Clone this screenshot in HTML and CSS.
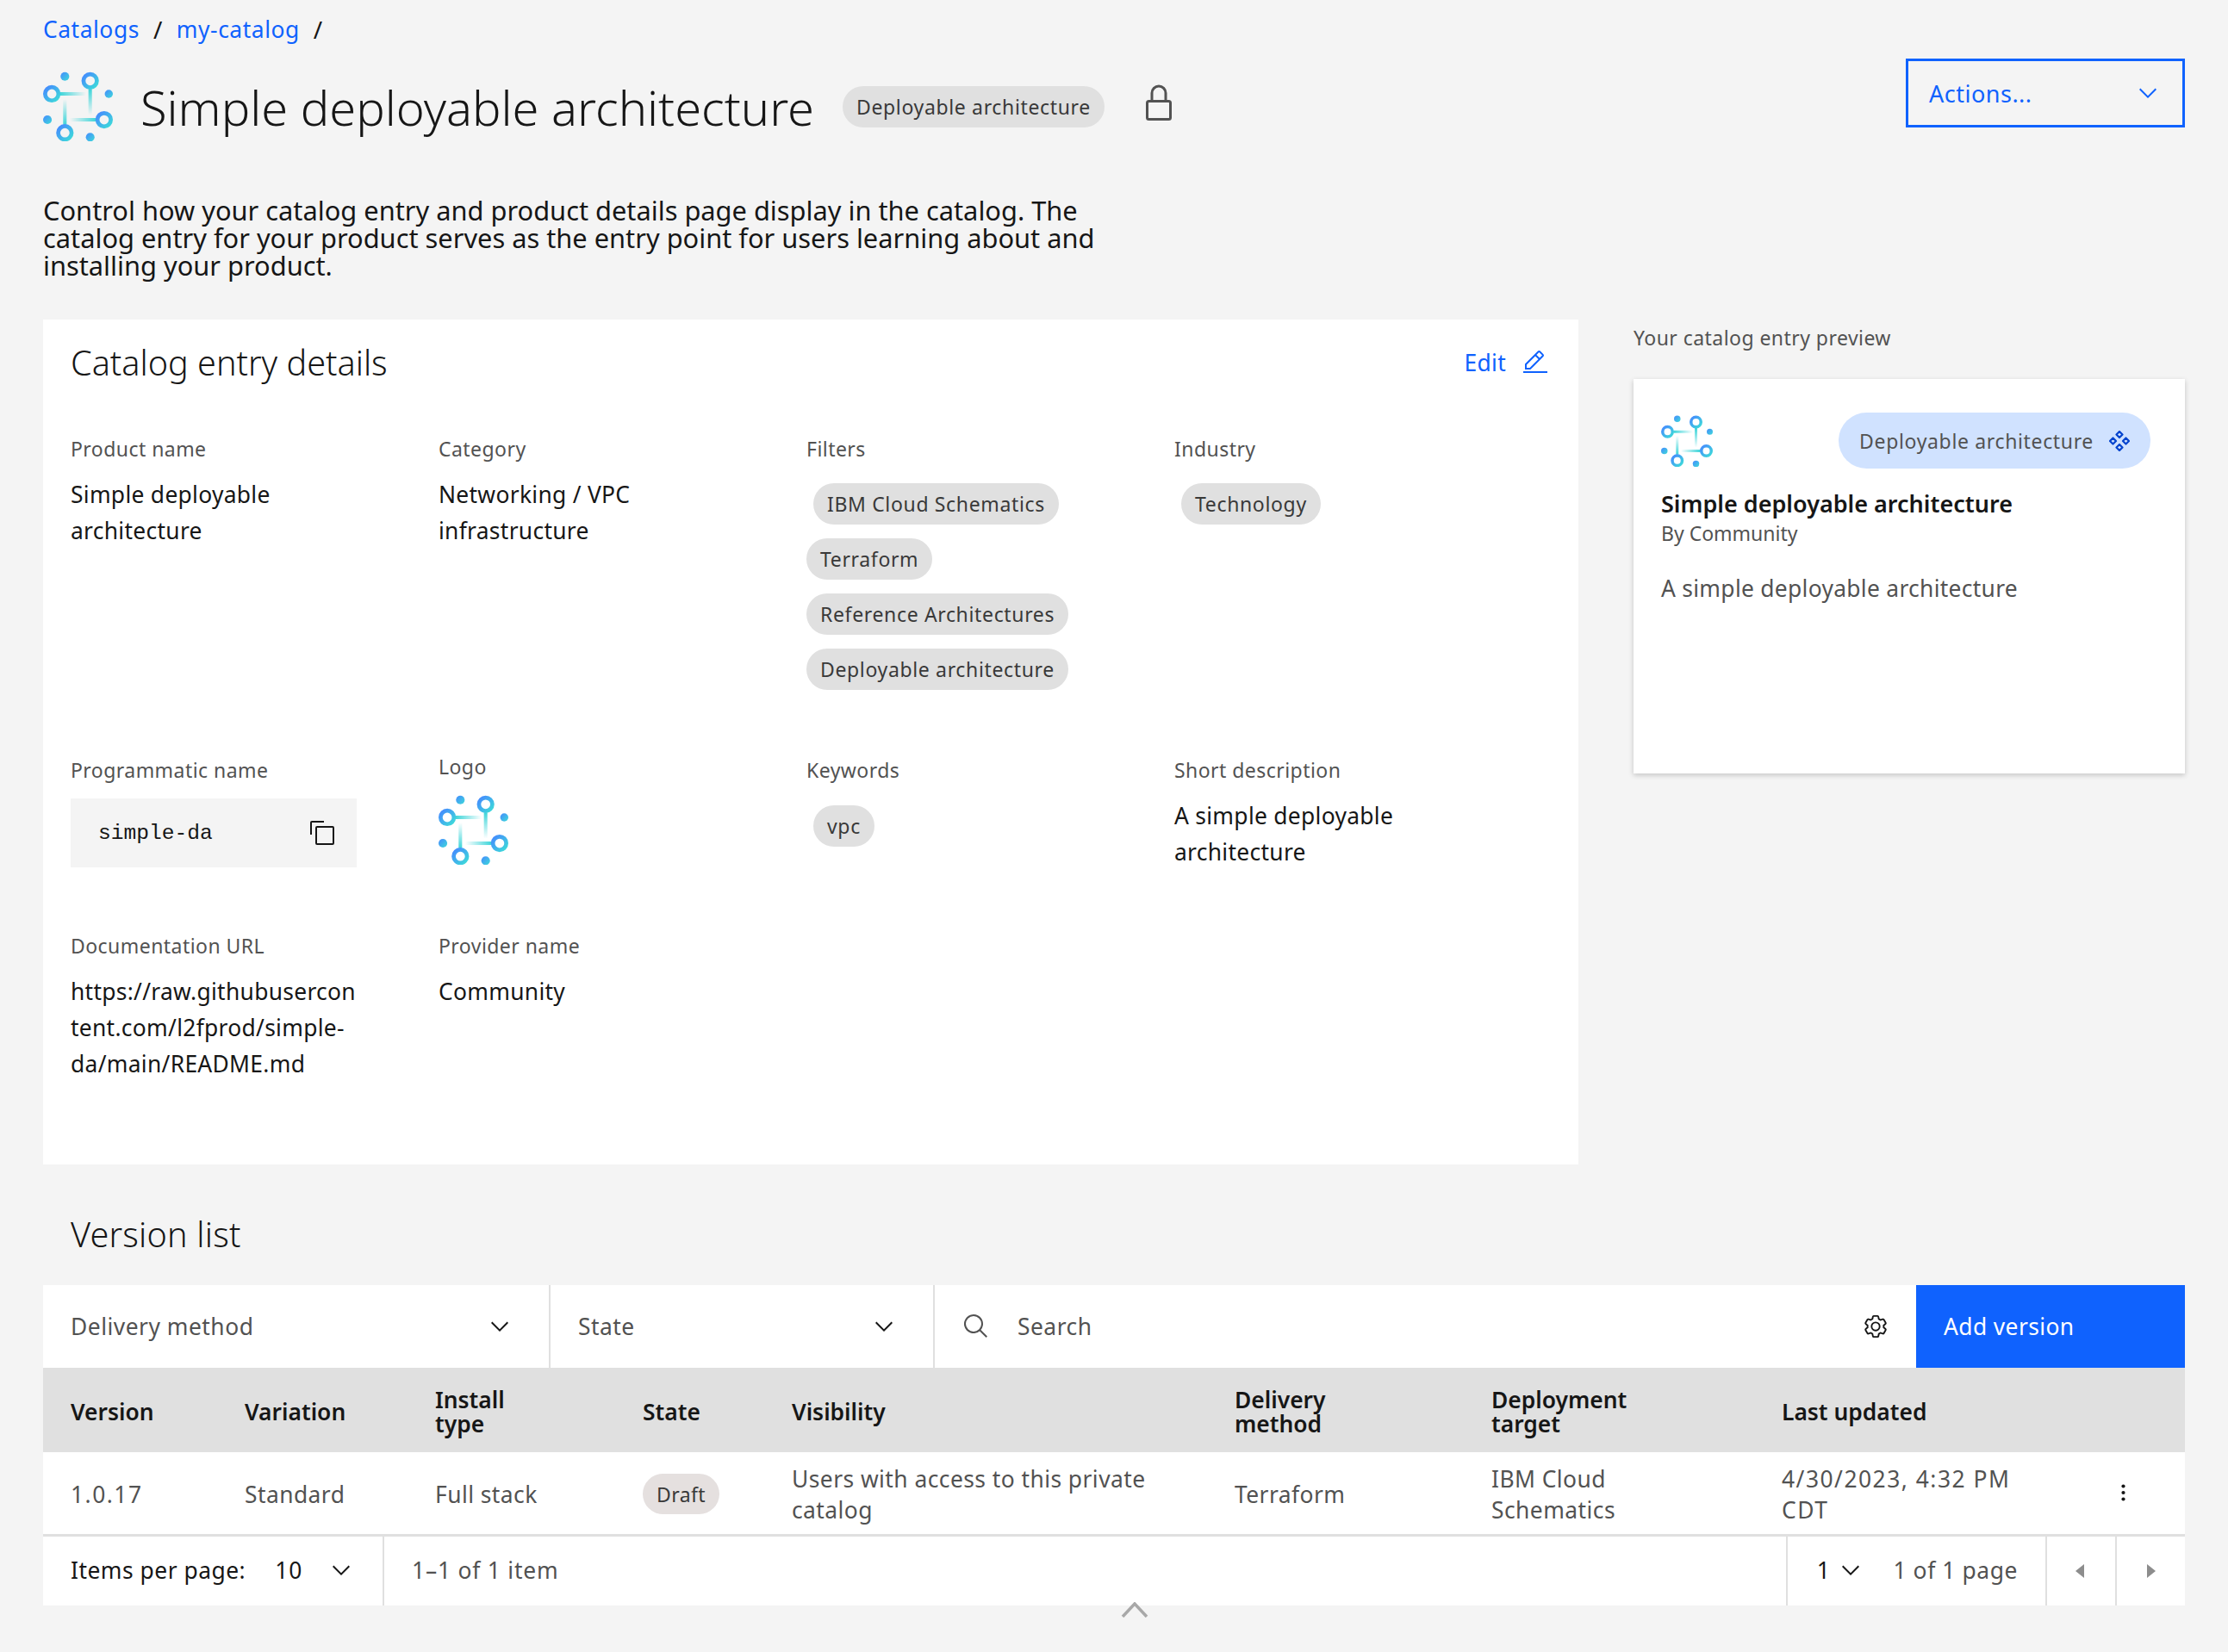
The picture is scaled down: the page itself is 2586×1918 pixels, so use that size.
FILE: index.html
```html
<!DOCTYPE html>
<html lang="en">
<head>
    <meta charset="UTF-8">
    <title>Simple deployable architecture</title>
    <link rel="stylesheet" href="styles.css">
</head>
<body>

    <header class="page-head">
        <div class="head-left">
            <nav class="breadcrumb">
                <a href="#">Catalogs</a><span class="sep">/</span><a href="#">my-catalog</a><span class="sep">/</span>
            </nav>
            <div class="title-row">
                <svg class="logo logo-lg" viewBox="60 70 240 240">
                    <defs>
                        <linearGradient id="ringGrad" x1="0" y1="0" x2="1" y2="1">
                            <stop offset="0" stop-color="#4589ff"/>
                            <stop offset="1" stop-color="#3ddbd9"/>
                        </linearGradient>
                        <linearGradient id="fadeRight" x1="0" y1="0" x2="1" y2="0">
                            <stop offset="0" stop-color="#3dd5d9"/>
                            <stop offset="1" stop-color="#3dd5d9" stop-opacity="0"/>
                        </linearGradient>
                        <linearGradient id="fadeLeft" x1="1" y1="0" x2="0" y2="0">
                            <stop offset="0" stop-color="#3dd5d9"/>
                            <stop offset="1" stop-color="#3dd5d9" stop-opacity="0"/>
                        </linearGradient>
                        <linearGradient id="fadeDown" x1="0" y1="0" x2="0" y2="1">
                            <stop offset="0" stop-color="#3dd5d9"/>
                            <stop offset="1" stop-color="#3dd5d9" stop-opacity="0"/>
                        </linearGradient>
                        <linearGradient id="fadeUp" x1="0" y1="1" x2="0" y2="0">
                            <stop offset="0" stop-color="#3dd5d9"/>
                            <stop offset="1" stop-color="#3dd5d9" stop-opacity="0"/>
                        </linearGradient>
                        <g id="logoMark">
                            <rect x="118" y="141" width="90" height="12" fill="url(#fadeRight)"/>
                            <rect x="216" y="130" width="12" height="90" fill="url(#fadeDown)"/>
                            <rect x="152" y="230" width="90" height="12" fill="url(#fadeLeft)"/>
                            <rect x="129" y="165" width="12" height="88" fill="url(#fadeUp)"/>
                            <circle cx="222" cy="102" r="23" fill="none" stroke="url(#ringGrad)" stroke-width="14"/>
                            <circle cx="90" cy="147" r="23" fill="none" stroke="url(#ringGrad)" stroke-width="14"/>
                            <circle cx="270" cy="236" r="23" fill="none" stroke="url(#ringGrad)" stroke-width="14"/>
                            <circle cx="135" cy="281" r="23" fill="none" stroke="url(#ringGrad)" stroke-width="14"/>
                            <circle cx="135" cy="87" r="15" fill="url(#ringGrad)"/>
                            <circle cx="286" cy="147" r="14" fill="url(#ringGrad)"/>
                            <circle cx="75" cy="236" r="15" fill="url(#ringGrad)"/>
                            <circle cx="222" cy="296" r="15" fill="url(#ringGrad)"/>
                        </g>
                    </defs>
                    <use href="#logoMark"/>
                </svg>
                <h1>Simple deployable architecture</h1>
                <span class="tag tag-title">Deployable architecture</span>
                <svg class="lock-icon" viewBox="0 0 30 42">
                    <path d="M7 18V10a8 8 0 0 1 16 0v8" fill="none" stroke="#525252" stroke-width="3"/>
                    <rect x="1.500" y="19.500" width="27" height="21" rx="2" fill="none" stroke="#525252" stroke-width="3"/>
                </svg>
            </div>
        </div>
        <button class="actions-btn">
            <span>Actions...</span>
            <svg class="chevron" viewBox="0 0 16 16"><path d="M8 11L3 6l.7-.7L8 9.6l4.3-4.3.7.7z" fill="#0f62fe"/></svg>
        </button>
    </header>

    <p class="intro">Control how your catalog entry and product details page display in the catalog. The catalog entry for your product serves as the entry point for users learning about and installing your product.</p>

    <div class="top-columns">
        <section class="details-card">
            <div class="card-head">
                <h2>Catalog entry details</h2>
                <a href="#" class="edit-link">Edit
                    <svg class="edit-icon" viewBox="0 0 32 32"><path d="M2 26H30V28H2zM25.4 9c.8-.8.8-2 0-2.8l-3.6-3.6c-.8-.8-2-.8-2.8 0l-15 15V24h6.4L25.4 9zM20.4 4L24 7.6l-3 3L17.4 7 20.4 4zM6 22v-3.6l10-10 3.6 3.6-10 10H6z" fill="#0f62fe"/></svg>
                </a>
            </div>
            <div class="details-grid">
                <div class="field">
                    <div class="field-label">Product name</div>
                    <div class="field-value">Simple deployable architecture</div>
                </div>
                <div class="field">
                    <div class="field-label">Category</div>
                    <div class="field-value">Networking / VPC infrastructure</div>
                </div>
                <div class="field">
                    <div class="field-label">Filters</div>
                    <div class="tag-stack">
                        <span class="tag tag-first">IBM Cloud Schematics</span>
                        <span class="tag">Terraform</span>
                        <span class="tag">Reference Architectures</span>
                        <span class="tag">Deployable architecture</span>
                    </div>
                </div>
                <div class="field">
                    <div class="field-label">Industry</div>
                    <div class="tag-stack">
                        <span class="tag tag-first">Technology</span>
                    </div>
                </div>

                <div class="field">
                    <div class="field-label">Programmatic name</div>
                    <div class="code-box">
                        <code>simple-da</code>
                        <svg class="copy-icon" viewBox="0 0 32 32">
                            <path d="M28,10V28H10V10H28m0-2H10a2,2,0,0,0-2,2V28a2,2,0,0,0,2,2H28a2,2,0,0,0,2-2V10a2,2,0,0,0-2-2Z" fill="#161616"/>
                            <path d="M4,18H2V4A2,2,0,0,1,4,2H18V4H4Z" fill="#161616"/>
                        </svg>
                    </div>
                </div>
                <div class="field field-logo">
                    <div class="field-label">Logo</div>
                    <svg class="logo logo-lg" viewBox="60 70 240 240"><use href="#logoMark"/></svg>
                </div>
                <div class="field">
                    <div class="field-label">Keywords</div>
                    <div class="tag-stack tag-stack-tight">
                        <span class="tag tag-first">vpc</span>
                    </div>
                </div>
                <div class="field">
                    <div class="field-label">Short description</div>
                    <div class="field-value">A simple deployable architecture</div>
                </div>

                <div class="field">
                    <div class="field-label">Documentation URL</div>
                    <div class="field-value">https://raw.githubusercon<br>tent.com/l2fprod/simple-<br>da/main/README.md</div>
                </div>
                <div class="field">
                    <div class="field-label">Provider name</div>
                    <div class="field-value">Community</div>
                </div>
            </div>
        </section>

        <aside class="preview">
            <div class="preview-label">Your catalog entry preview</div>
            <div class="preview-card">
                <div class="preview-top">
                    <svg class="logo logo-sm" viewBox="60 70 240 240"><use href="#logoMark"/></svg>
                    <span class="preview-pill">
                        Deployable architecture
                        <svg class="diamonds" viewBox="0 0 24 24">
                            <path d="M12 1l3.500 3.500L12 8 8.500 4.500zM4.500 8.500L8 12l-3.500 3.500L1 12zM19.500 8.500L23 12l-3.500 3.500L16 12zM12 16l3.500 3.500L12 23l-3.500-3.500z" fill="none" stroke="#0043ce" stroke-width="2.200" stroke-linejoin="round"/>
                        </svg>
                    </span>
                </div>
                <div class="preview-title">Simple deployable architecture</div>
                <div class="preview-by">By Community</div>
                <div class="preview-desc">A simple deployable architecture</div>
            </div>
        </aside>
    </div>

    <h2 class="version-title">Version list</h2>

    <section class="versions">
        <div class="toolbar">
            <div class="filter-select filter-delivery">
                <span>Delivery method</span>
                <svg class="chevron" viewBox="0 0 16 16"><path d="M8 11L3 6l.7-.7L8 9.6l4.3-4.3.7.7z" fill="#161616"/></svg>
            </div>
            <div class="filter-select filter-state">
                <span>State</span>
                <svg class="chevron" viewBox="0 0 16 16"><path d="M8 11L3 6l.7-.7L8 9.6l4.3-4.3.7.7z" fill="#161616"/></svg>
            </div>
            <div class="search-box">
                <svg class="search-icon" viewBox="0 0 32 32"><path d="M29,27.5859l-7.5521-7.5521a11.0177,11.0177,0,1,0-1.4141,1.4141L27.5859,29ZM4,13a9,9,0,1,1,9,9A9.01,9.01,0,0,1,4,13Z" fill="#525252"/></svg>
                <span class="search-text">Search</span>
                <svg class="gear-icon" viewBox="0 0 32 32">
                    <path d="M27,16.76c0-.25,0-.5,0-.76s0-.51,0-.77l1.92-1.68A2,2,0,0,0,29.3,11L26.94,7a2,2,0,0,0-1.73-1,2,2,0,0,0-.64.1l-2.43.82a11.35,11.35,0,0,0-1.31-.75l-.51-2.52a2,2,0,0,0-2-1.61H13.64a2,2,0,0,0-2,1.61l-.51,2.52a11.48,11.48,0,0,0-1.32.75L7.43,6.06A2,2,0,0,0,6.79,6,2,2,0,0,0,5.06,7L2.7,11a2,2,0,0,0,.41,2.51L5,15.24c0,.25,0,.5,0,.76s0,.51,0,.77L3.11,18.45A2,2,0,0,0,2.7,21L5.06,25a2,2,0,0,0,1.73,1,2,2,0,0,0,.64-.1l2.43-.82a11.35,11.35,0,0,0,1.31.75l.51,2.52a2,2,0,0,0,2,1.61h4.72a2,2,0,0,0,2-1.61l.51-2.52a11.48,11.48,0,0,0,1.32-.75l2.42.82a2,2,0,0,0,.64.1,2,2,0,0,0,1.73-1L29.3,21a2,2,0,0,0-.41-2.51ZM25.21,24l-3.43-1.16a8.86,8.86,0,0,1-2.71,1.57L18.36,28H13.64l-.71-3.55a9.36,9.36,0,0,1-2.7-1.57L6.79,24,4.43,20l2.72-2.4a8.9,8.9,0,0,1,0-3.13L4.43,12,6.79,8l3.43,1.16a8.86,8.86,0,0,1,2.71-1.57L13.64,4h4.72l.71,3.55a9.36,9.36,0,0,1,2.7,1.57L25.21,8,27.57,12l-2.72,2.4a8.9,8.9,0,0,1,0,3.13L27.57,20Z" fill="#161616"/>
                    <path d="M16,22a6,6,0,1,1,6-6A5.94,5.94,0,0,1,16,22Zm0-10a3.91,3.91,0,0,0-4,4,3.91,3.91,0,0,0,4,4,3.91,3.91,0,0,0,4-4A3.91,3.91,0,0,0,16,12Z" fill="#161616"/>
                </svg>
            </div>
            <button class="add-btn">Add version</button>
        </div>

        <table class="version-table">
            <colgroup>
                <col class="col-version">
                <col class="col-variation">
                <col class="col-install">
                <col class="col-state">
                <col class="col-visibility">
                <col class="col-delivery">
                <col class="col-target">
                <col class="col-updated">
                <col class="col-menu">
            </colgroup>
            <thead>
                <tr>
                    <th>Version</th>
                    <th>Variation</th>
                    <th><span class="head-wrap">Install type</span></th>
                    <th>State</th>
                    <th>Visibility</th>
                    <th><span class="head-wrap">Delivery method</span></th>
                    <th><span class="head-wrap">Deployment target</span></th>
                    <th>Last updated</th>
                    <th></th>
                </tr>
            </thead>
            <tbody>
                <tr>
                    <td class="num">1.0.17</td>
                    <td>Standard</td>
                    <td>Full stack</td>
                    <td><span class="tag tag-draft">Draft</span></td>
                    <td>Users with access to this private<br>catalog</td>
                    <td>Terraform</td>
                    <td>IBM Cloud<br>Schematics</td>
                    <td class="num">4/30/2023, 4:32 PM<br>CDT</td>
                    <td class="menu-cell">
                        <svg class="overflow-icon" viewBox="0 0 5 20">
                            <circle cx="2.500" cy="2.500" r="2.100"/><circle cx="2.500" cy="10" r="2.100"/><circle cx="2.500" cy="17.500" r="2.100"/>
                        </svg>
                    </td>
                </tr>
            </tbody>
        </table>

        <div class="pagination">
            <div class="per-page">
                <span class="dark">Items per page:</span>
                <span class="dark per-value">10</span>
                <svg class="chevron" viewBox="0 0 16 16"><path d="M8 11L3 6l.7-.7L8 9.6l4.3-4.3.7.7z" fill="#161616"/></svg>
            </div>
            <div class="item-range">1–1 of 1 item</div>
            <div class="page-pick">
                <span class="dark">1</span>
                <svg class="chevron" viewBox="0 0 16 16"><path d="M8 11L3 6l.7-.7L8 9.6l4.3-4.3.7.7z" fill="#161616"/></svg>
                <span class="page-count">1 of 1 page</span>
            </div>
            <div class="page-btn"><svg class="caret" viewBox="0 0 32 32"><path d="M20 24L10 16 20 8z" fill="#8d8d8d"/></svg></div>
            <div class="page-btn"><svg class="caret" viewBox="0 0 32 32"><path d="M12 8L22 16 12 24z" fill="#8d8d8d"/></svg></div>
            <svg class="collapse-chevron" viewBox="0 0 32 18"><path d="M2 17L16 2l14 15" fill="none" stroke="#a8a8a8" stroke-width="3.500"/></svg>
        </div>
    </section>

</body>
</html>
```

FILE: styles.css
```css
* {
    box-sizing: border-box;
}
body {
    min-height: 100vh;
    margin: 0;
    padding: 16px 50px 0;
    background: #f4f4f4;
    color: #161616;
    font-family: "Noto Sans", "Open Sans", sans-serif;
    font-weight: 400;
    font-size: 26.4px;
    letter-spacing: 0.3px;
}
h1, h2, p {
    margin: 0;
    font-weight: 300;
}
a {
    color: #0f62fe;
    text-decoration: none;
}
svg {
    display: block;
    flex: none;
}

/* header */
.page-head {
    display: flex;
    justify-content: space-between;
    align-items: flex-start;
}
.breadcrumb {
    display: flex;
    font-size: 26.4px;
    line-height: 36px;
    letter-spacing: 0.55px;
}
.breadcrumb .sep {
    margin: 0 16px;
    font-size: 28px;
}
.title-row {
    display: flex;
    align-items: center;
    margin-top: 31px;
}
.logo-lg {
    width: 81px;
    height: 81px;
}
.logo-sm {
    width: 60px;
    height: 60px;
}
h1 {
    font-size: 56px;
    line-height: 78px;
    margin-left: 32px;
    letter-spacing: 0;
}
.tag {
    display: inline-flex;
    align-items: center;
    height: 48px;
    padding: 0 16px;
    border-radius: 24px;
    background: #e0e0e0;
    color: #393939;
    font-size: 23px;
    font-weight: 400;
    letter-spacing: 0.65px;
    white-space: nowrap;
}
.tag-title {
    margin-left: 33px;
}
.lock-icon {
    width: 30px;
    height: 42px;
    margin-left: 48px;
    margin-top: -9px;
}
.actions-btn {
    display: flex;
    justify-content: space-between;
    align-items: center;
    width: 324px;
    height: 80px;
    margin-top: 52px;
    padding: 0 24px 0 24px;
    border: 3px solid #0f62fe;
    background: transparent;
    color: #0f62fe;
    font: inherit;
    font-size: 27px;
    letter-spacing: 0.5px;
}
.chevron {
    width: 32px;
    height: 32px;
}
.intro {
    width: 1275px;
    margin-top: 64px;
    font-size: 30.8px;
    font-weight: 400;
    line-height: 32px;
    letter-spacing: 0;
}

/* catalog entry card */
.top-columns {
    display: grid;
    grid-template-columns: 1782px 640px;
    gap: 64px;
    margin-top: 47px;
}
.details-card {
    min-height: 981px;
    padding: 20px 34px 0 32px;
    background: #fff;
}
.card-head {
    display: flex;
    justify-content: space-between;
    align-items: center;
    height: 60px;
    margin-bottom: 55px;
}
h2 {
    font-size: 39.6px;
    line-height: 58px;
    letter-spacing: 0;
}
.edit-link {
    display: flex;
    align-items: center;
    gap: 18px;
}
.edit-icon {
    width: 32px;
    height: 32px;
}
.details-grid {
    display: grid;
    grid-template-columns: repeat(4, 427px);
    grid-template-rows: 373px 204px auto;
}
.field {
    padding-right: 90px;
}
.field-label {
    height: 32px;
    margin-bottom: 16px;
    color: #525252;
    font-size: 23px;
    line-height: 30px;
    letter-spacing: 0.45px;
}
.field-value {
    margin-top: -1px;
    font-size: 26.4px;
    line-height: 42px;
}
.field-logo {
    margin-top: -4px;
}
.tag-stack {
    display: flex;
    flex-direction: column;
    align-items: flex-start;
    gap: 16px;
    padding-top: 7px;
}
.tag-stack-tight {
    padding-top: 8px;
}
.tag-first {
    margin-left: 8px;
}
.code-box {
    display: flex;
    justify-content: space-between;
    align-items: center;
    width: 332px;
    height: 80px;
    padding: 0 24px 0 32px;
    background: #f4f4f4;
}
.code-box code {
    font-family: "Liberation Mono", monospace;
    font-size: 24.6px;
    letter-spacing: 0;
}
.copy-icon {
    width: 32px;
    height: 32px;
}

/* preview */
.preview-label {
    margin-top: 6px;
    color: #525252;
    font-size: 23px;
    line-height: 30px;
    letter-spacing: 0.45px;
}
.preview-card {
    height: 458px;
    margin-top: 33px;
    padding: 39px 40px 0 32px;
    background: #fff;
    box-shadow: 0 2px 6px rgba(0, 0, 0, 0.2);
}
.preview-top {
    display: flex;
    justify-content: space-between;
    align-items: center;
    height: 65px;
}
.preview-pill {
    display: flex;
    align-items: center;
    gap: 18px;
    height: 65px;
    padding: 0 24px;
    border-radius: 33px;
    background: #d0e2ff;
    color: #525252;
    font-size: 23px;
    letter-spacing: 0.65px;
}
.diamonds {
    width: 24px;
    height: 24px;
}
.preview-title {
    margin-top: 23px;
    font-size: 27px;
    font-weight: 600;
    line-height: 36px;
    letter-spacing: 0;
}
.preview-by {
    color: #525252;
    font-size: 23px;
    line-height: 32px;
    letter-spacing: 0;
}
.preview-desc {
    margin-top: 28px;
    color: #525252;
    font-size: 26.4px;
    line-height: 40px;
}

/* version list */
.version-title {
    margin-top: 56px;
    padding-left: 32px;
    line-height: 50px;
    height: 52px;
    letter-spacing: 0.2px;
}
.versions {
    position: relative;
    margin-top: 32px;
}
.toolbar {
    display: flex;
    height: 96px;
    background: #fff;
    color: #525252;
    letter-spacing: 0.5px;
}
.filter-select {
    display: flex;
    justify-content: space-between;
    align-items: center;
    padding: 0 41px 0 32px;
    border-right: 2px solid #e0e0e0;
}
.filter-delivery {
    width: 589px;
}
.filter-state {
    width: 446px;
}
.search-box {
    flex: 1;
    display: flex;
    align-items: center;
    padding: 0 32px;
}
.search-icon {
    width: 32px;
    height: 32px;
}
.search-text {
    flex: 1;
    margin-left: 32px;
}
.gear-icon {
    width: 30px;
    height: 30px;
}
.add-btn {
    width: 312px;
    padding: 0 32px;
    border: none;
    background: #0f62fe;
    color: #fff;
    font: inherit;
    letter-spacing: 0.4px;
    text-align: left;
}
.version-table {
    width: 100%;
    table-layout: fixed;
    border-collapse: collapse;
    background: #fff;
}
.col-version { width: 202px; }
.col-variation { width: 221px; }
.col-install { width: 241px; }
.col-state { width: 173px; }
.col-visibility { width: 514px; }
.col-delivery { width: 298px; }
.col-target { width: 337px; }
.col-updated { width: 380px; }
th {
    height: 98px;
    padding: 3px 0 0 32px;
    background: #e0e0e0;
    font-size: 26.4px;
    font-weight: 600;
    line-height: 28px;
    letter-spacing: 0;
    text-align: left;
}
.head-wrap {
    display: block;
    width: min-content;
}
td {
    height: 96px;
    padding: 3px 0 0 32px;
    border-bottom: 3px solid #e0e0e0;
    color: #525252;
    line-height: 36px;
    letter-spacing: 0.45px;
}
td.num {
    letter-spacing: 1.5px;
}
.tag-draft {
    height: 47px;
    background: #e5e0df;
    letter-spacing: 0.4px;
}
.menu-cell {
    padding: 0 0 0 46px;
}
.overflow-icon {
    width: 5px;
    height: 20px;
    fill: #161616;
}
.pagination {
    display: flex;
    align-items: stretch;
    height: 80px;
    background: #fff;
    color: #525252;
}
.dark {
    color: #161616;
}
.per-page {
    display: flex;
    align-items: center;
    width: 396px;
    padding-left: 32px;
    padding-bottom: 2px;
    border-right: 2px solid #e0e0e0;
    letter-spacing: 0.5px;
}
.per-value {
    margin-left: 34px;
    letter-spacing: 1px;
}
.per-page .chevron {
    margin-left: 29px;
}
.item-range {
    flex: 1;
    display: flex;
    align-items: center;
    padding-left: 32px;
    padding-bottom: 2px;
    letter-spacing: 0.8px;
}
.page-pick {
    display: flex;
    align-items: center;
    padding: 0 32px 2px 34px;
    border-left: 2px solid #e0e0e0;
    letter-spacing: 0.6px;
}
.page-pick .chevron {
    margin-left: 8px;
}
.page-count {
    margin-left: 33px;
}
.page-btn {
    display: flex;
    justify-content: center;
    align-items: center;
    width: 81px;
    padding-right: 2px;
    border-left: 2px solid #e0e0e0;
}
.caret {
    width: 32px;
    height: 32px;
}
.collapse-chevron {
    position: absolute;
    left: 1251px;
    bottom: -14px;
    width: 32px;
    height: 18px;
}
```
